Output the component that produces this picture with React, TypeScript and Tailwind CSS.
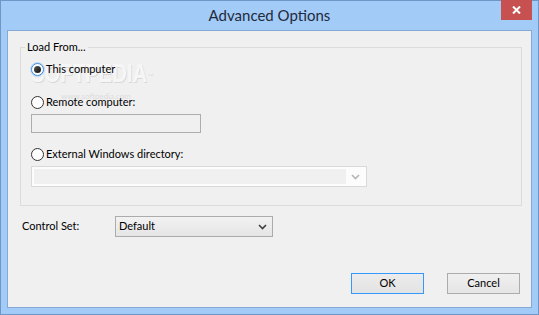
import React from "react";

const font = { fontFamily: 'Lato, "Noto Sans", sans-serif' };

function Radio({ checked }: { checked?: boolean }) {
  return checked ? (
    <span className="relative flex h-[13px] w-[13px] shrink-0 items-center justify-center rounded-full border border-[#3c8ce0] bg-white shadow-[0_0_0_1px_rgba(120,180,240,0.35)]">
      <span className="h-[7px] w-[7px] rounded-full bg-gradient-to-br from-[#555555] to-[#111111]" />
    </span>
  ) : (
    <span className="h-[13px] w-[13px] shrink-0 rounded-full border border-[#333333] bg-white" />
  );
}

function Chevron({ color }: { color: string }) {
  return (
    <svg width="9" height="6" viewBox="0 0 9 6">
      <path d="M1 1 L4.5 4.5 L8 1" fill="none" stroke={color} strokeWidth="1.6" />
    </svg>
  );
}

export default function App() {
  return (
    <div
      className="flex h-[315px] w-[539px] flex-col border border-[#6f96c6] bg-[#a3cbf7] px-[6px] pb-[6px] text-[11px] text-black"
      style={font}
    >
      {/* title bar */}
      <div className="relative flex h-[29px] shrink-0 items-center justify-center">
        <span className="pb-[1px] text-[15px] text-[#1f2a3c]">Advanced Options</span>
        <div className="absolute -top-[1px] right-0 flex h-[20px] w-[31px] items-center justify-center bg-[#c75050]">
          <svg width="9" height="8" viewBox="0 0 9 8">
            <path d="M1 0.5 L8 7.5 M8 0.5 L1 7.5" stroke="white" strokeWidth="2" />
          </svg>
        </div>
      </div>

      {/* client area */}
      <div className="relative flex flex-1 flex-col border border-[#86a8d4] bg-[#f0f0f0]">
        {/* group box */}
        <div className="relative ml-[12px] mr-[9px] mt-[16px] flex flex-col border border-[#dcdcdc] pb-[18px] pl-[10px] pt-[13px]">
          <span className="absolute -top-[9px] left-[4px] bg-[#f0f0f0] px-[2px] leading-[16px]">Load From...</span>

          {/* watermark */}
          <div className="pointer-events-none absolute left-[10px] top-[12px] select-none leading-none">
            <div
              className="origin-left scale-x-[0.78] whitespace-nowrap text-[26px] font-bold text-[#f6f6f6] [text-shadow:1px_1px_0_#d8d8d8]"
              style={{ fontFamily: '"Liberation Sans", sans-serif' }}
            >
              SOFTPEDIA<sup className="text-[8px]">™</sup>
            </div>
            <div className="ml-[30px] mt-[6px] text-[8px] text-[#dcdcdc]">www.softpedia.com</div>
          </div>

          <div className="relative flex h-[16px] items-center gap-[2px]">
            <Radio checked />
            <span>This computer</span>
          </div>

          <div className="relative mt-[17px] flex h-[16px] items-center gap-[2px]">
            <Radio />
            <span>Remote computer:</span>
          </div>

          <div className="mt-[4px] h-[19px] w-[170px] border border-[#adadad] bg-[#f0f0f0]" />

          <div className="mt-[13px] flex h-[16px] items-center gap-[2px]">
            <Radio />
            <span>External Windows directory:</span>
          </div>

          <div className="mt-[4px] flex h-[21px] w-[336px] items-center border border-[#d9d9d9] bg-[#fcfcfc] p-[2px]">
            <div className="h-full flex-1 bg-[#f0f0f0]" />
            <div className="flex w-[18px] items-center justify-center">
              <Chevron color="#b5b5b5" />
            </div>
          </div>
        </div>

        {/* control set */}
        <div className="mt-[10px] flex items-center pl-[14px]">
          <span className="w-[93px]">Control Set:</span>
          <div className="flex h-[21px] w-[158px] items-center justify-between border border-[#acacac] bg-gradient-to-b from-[#f2f2f2] to-[#e5e5e5] pl-[3px] pr-[5px]">
            <span>Default</span>
            <Chevron color="#404040" />
          </div>
        </div>

        <div className="flex-1" />

        {/* buttons */}
        <div className="flex justify-end gap-[23px] pb-[13px] pr-[11px]">
          <button className="flex h-[21px] w-[73px] items-center justify-center border border-[#3399ff] bg-gradient-to-b from-[#ececec] to-[#e3e3e3]">
            OK
          </button>
          <button className="flex h-[21px] w-[73px] items-center justify-center border border-[#acacac] bg-gradient-to-b from-[#f0f0f0] to-[#e5e5e5]">
            Cancel
          </button>
        </div>
      </div>
    </div>
  );
}
